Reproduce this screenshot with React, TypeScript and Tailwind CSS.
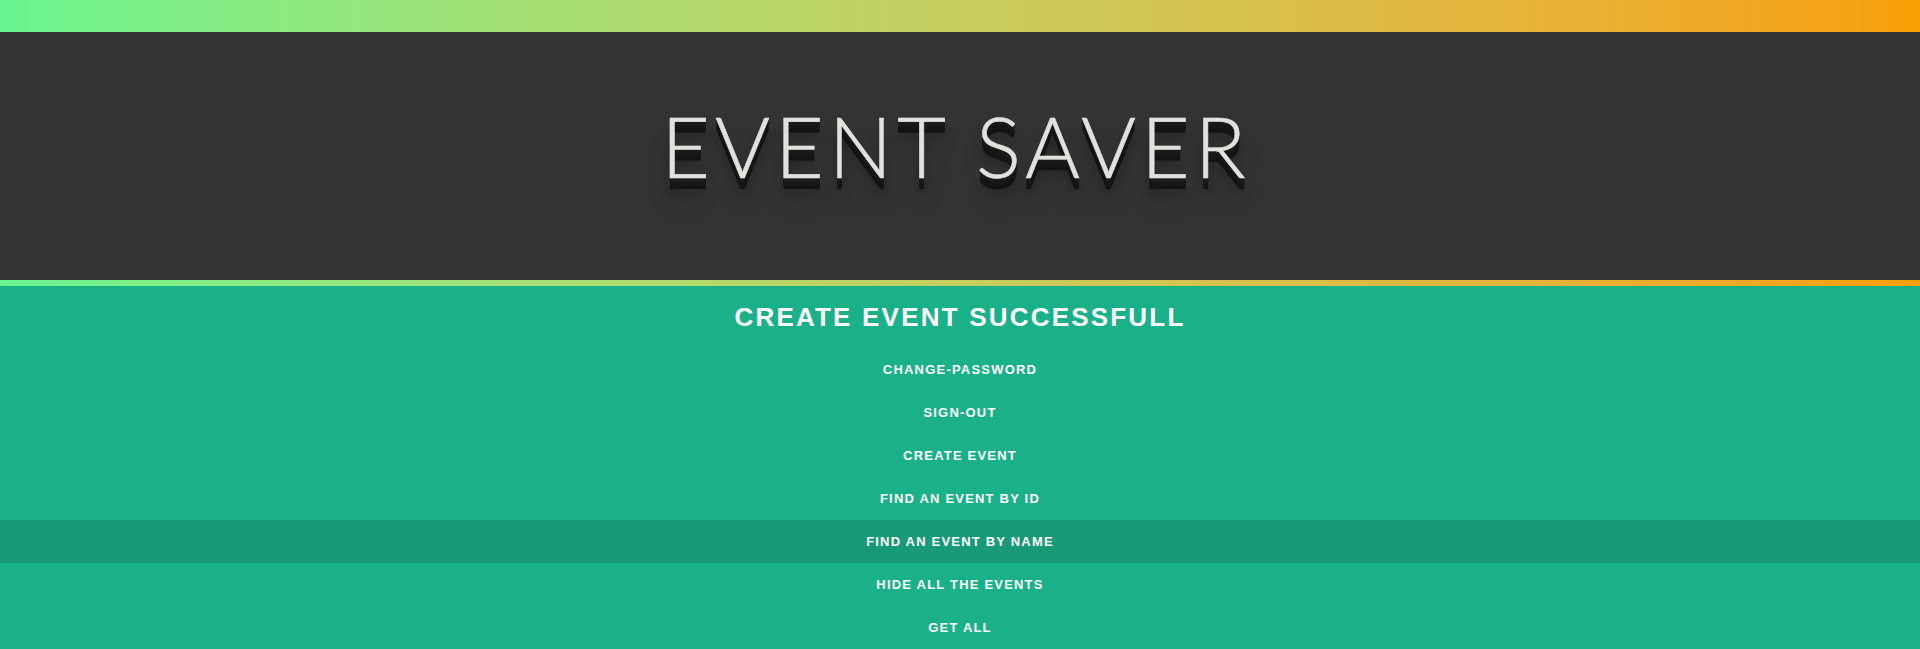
import React from "react";

const items = [
  "CHANGE-PASSWORD",
  "SIGN-OUT",
  "CREATE EVENT",
  "FIND AN EVENT BY ID",
  "FIND AN EVENT BY NAME",
  "HIDE ALL THE EVENTS",
  "GET ALL",
];

export default function App() {
  return (
    <div className="w-full min-h-[649px] bg-[#1ab188] font-['Liberation_Sans',Arial,sans-serif]">
      <div className="h-[32px] bg-gradient-to-r from-[#67f58f] to-[#f89f03]" />
      <div className="h-[248px] bg-[#333333] flex items-center justify-center">
        <h1 className="pb-[21px] text-[84px] leading-none font-light tracking-[5px] pr-[8px] text-[#e2e1dd] font-['Lato','Open_Sans',sans-serif] [-webkit-text-stroke:0.6px_#e2e1dd] [text-shadow:0_1px_0_#1c1c1c,0_2px_0_#1b1b1b,0_3px_0_#1a1a1a,0_4px_0_#191919,0_5px_0_#181818,0_6px_0_#171717,0_7px_0_#161616,0_8px_0_#151515,0_9px_0_#141414,0_10px_0_#131313,0_11px_0_#121212,0_12px_0_#2a2a2a,0_15px_10px_rgba(0,0,0,0.35),0_22px_24px_rgba(0,0,0,0.2)]">
          EVENT SAVER
        </h1>
      </div>
      <div className="h-[6px] bg-gradient-to-r from-[#67f58f] to-[#f89f03]" />
      <div className="h-[62px] flex items-center justify-center">
        <h2 className="text-[26px] leading-none font-bold tracking-[2.2px] text-white">
          CREATE EVENT SUCCESSFULL
        </h2>
      </div>
      <ul>
        {items.map((t) => (
          <li
            key={t}
            className={`h-[43px] flex items-center justify-center text-[13px] font-bold tracking-[1.2px] text-white ${
              t === "FIND AN EVENT BY NAME" ? "bg-[#189a77]" : ""
            }`}
          >
            {t}
          </li>
        ))}
      </ul>
    </div>
  );
}
